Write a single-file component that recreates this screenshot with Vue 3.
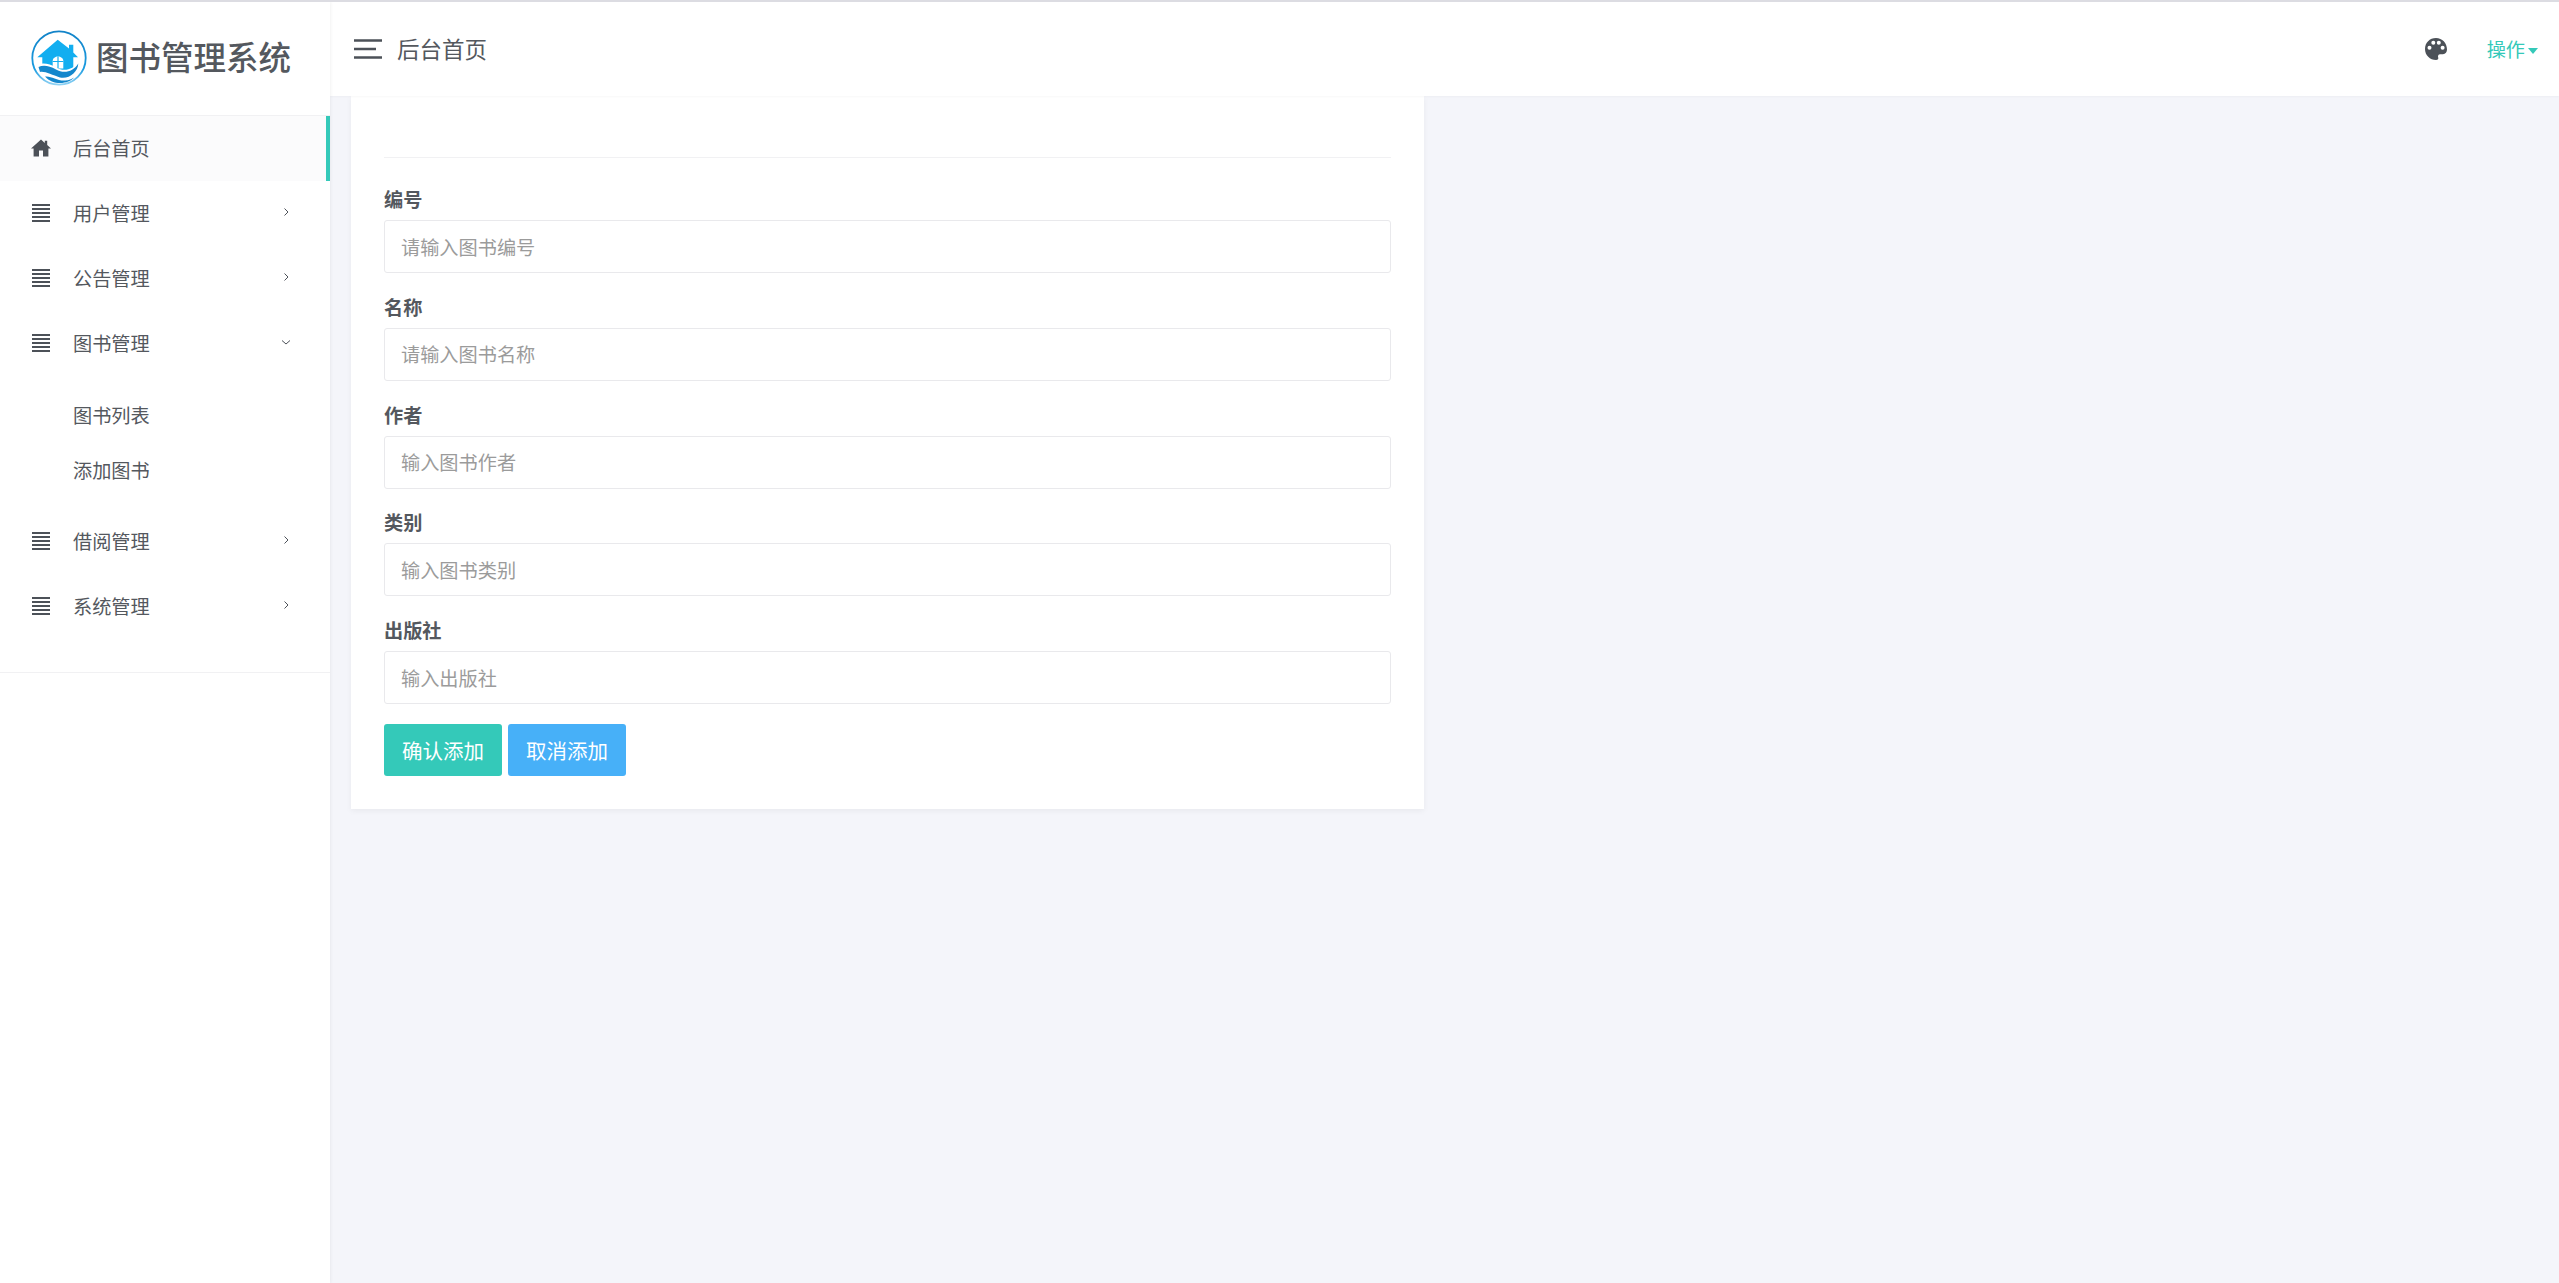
<template>
  <div class="app">
    <aside class="sidebar">
      <div class="brand">
        <svg class="logo" viewBox="0 0 56 56" width="56" height="56">
          <defs>
            <linearGradient id="ring" x1="0" y1="0" x2="0" y2="1">
              <stop offset="0" stop-color="#1283c8" />
              <stop offset="0.7" stop-color="#1a9be0" />
              <stop offset="1" stop-color="#8fd2f4" />
            </linearGradient>
          </defs>
          <circle cx="28" cy="28" r="26.700" fill="#fff" stroke="url(#ring)" stroke-width="1.800" />
          <path d="M26.700 9.700 L38 18.500 V14.700 H42.300 V22.500 L47 27.300 H42.300 V40 H11.300 V27.300 H6.300 Z" fill="#12aef0" />
          <path d="M21.700 38.500 V31 C21.700 25 32.300 25 32.300 31 V38.500 Z" fill="#fff" />
          <path d="M27 26.500 V38.500 M21.700 31.500 H32.300" stroke="#12aef0" stroke-width="1.200" />
          <path d="M6 34.500 C12 32.500 19 33.500 25 37.500 C33 42 42 40 48 31 L50 34 C48 46 38 50 28 47 C20 44 12 43 8 44 Z" fill="#fff" />
          <path d="M7.500 37 C12 35 18 35.500 25 39.500 C33 44 42 42 47.300 33.500 C47 42 38 49.500 29 47.500 C21 45 14 41 9 42 Z" fill="#1487cc" />
          <path d="M14 46.500 C20 45.500 26 51 34 50.500 C38 50.300 41 49 43 47.500 C38 54 22 56 14 46.500 Z" fill="#1487cc" />
        </svg>
        <span class="brand-name">图书管理系统</span>
      </div>
      <nav class="menu">
        <template v-for="item in menu" :key="item.label">
          <a class="menu-item" :class="{ active: item.active }">
            <svg v-if="item.active" class="mi home" viewBox="0 0 20 18" width="20" height="18">
              <path d="M10 0.500 L13.800 3.900 V1.800 H16.200 V6 L20 9.500 H17.400 V17.500 H12 V11.500 H8 V17.500 H2.600 V9.500 H0 Z" fill="#4c5158" />
            </svg>
            <svg v-else class="mi" viewBox="0 0 18 18" width="18" height="18">
              <path d="M0 1h18M0 5h18M0 9h18M0 13h18M0 17h18" stroke="#4c5158" stroke-width="2" />
            </svg>
            <span class="label">{{ item.label }}</span>
            <svg v-if="item.arrow === 'right'" class="arrow" viewBox="0 0 8 10" width="8" height="10">
              <path d="M2.500 1.500 L6 5 L2.500 8.500" fill="none" stroke="#4c5158" stroke-width="1" />
            </svg>
            <svg v-if="item.arrow === 'down'" class="arrow down" viewBox="0 0 10 8" width="10" height="8">
              <path d="M1 2.500 L5 6 L9 2.500" fill="none" stroke="#4c5158" stroke-width="1" />
            </svg>
          </a>
          <div v-if="item.children" class="submenu">
            <a v-for="c in item.children" :key="c" class="sub-item">{{ c }}</a>
          </div>
        </template>
      </nav>
    </aside>

    <div class="main">
      <header class="topbar">
        <svg class="burger" viewBox="0 0 28 20" width="28" height="20">
          <path d="M0 1.500h28M0 10h22M0 18.500h28" stroke="#4c5158" stroke-width="2.400" />
        </svg>
        <span class="page-title">后台首页</span>
        <svg class="palette" viewBox="0 0 24 24" width="24" height="24">
          <path fill-rule="evenodd" fill="#4c5158" d="M12 1C5.600 1 1 5.700 1 12s5 11 11 11c2 0 2.600-1.200 2.200-2.400-.5-1.500-.2-3.400 2-3.400H19c2.500 0 4-2 4-4.700C23 6 18.200 1 12 1ZM5.500 12.700a2 2 0 1 1 0-4 2 2 0 0 1 0 4Zm3.800-5a2 2 0 1 1 0-4 2 2 0 0 1 0 4Zm5.500 0a2 2 0 1 1 0-4 2 2 0 0 1 0 4Zm3.800 5a2 2 0 1 1 0-4 2 2 0 0 1 0 4Z" />
        </svg>
        <span class="action">操作<i class="caret"></i></span>
      </header>

      <section class="content">
        <div class="card">
          <div class="card-head"></div>
          <form class="form" @submit.prevent>
            <div v-for="f in fields" :key="f.label" class="field">
              <label>{{ f.label }}</label>
              <input type="text" :placeholder="f.placeholder" />
            </div>
            <div class="buttons">
              <button class="btn primary" type="button">确认添加</button>
              <button class="btn info" type="button">取消添加</button>
            </div>
          </form>
        </div>
      </section>
    </div>
  </div>
</template>

<script setup>
const menu = [
  { label: '后台首页', active: true },
  { label: '用户管理', arrow: 'right' },
  { label: '公告管理', arrow: 'right' },
  { label: '图书管理', arrow: 'down', children: ['图书列表', '添加图书'] },
  { label: '借阅管理', arrow: 'right' },
  { label: '系统管理', arrow: 'right' }
]

const fields = [
  { label: '编号', placeholder: '请输入图书编号' },
  { label: '名称', placeholder: '请输入图书名称' },
  { label: '作者', placeholder: '输入图书作者' },
  { label: '类别', placeholder: '输入图书类别' },
  { label: '出版社', placeholder: '输入出版社' }
]
</script>

<style>
html,
body {
  margin: 0;
  background: #f4f5fa;
}
</style>

<style scoped>
.app {
  display: flex;
  height: 1283px;
  box-sizing: border-box;
  border-top: 2px solid #dcdce2;
  font-family: "Noto Sans CJK SC", "Noto Sans", sans-serif;
  color: #54585e;
  overflow: hidden;
}
.sidebar {
  width: 330px;
  flex: none;
  background: #fff;
  box-shadow: 1px 0 3px rgba(0, 0, 0, 0.05);
  position: relative;
  z-index: 2;
}
.brand {
  height: 113px;
  display: flex;
  align-items: center;
  padding-left: 31px;
  gap: 9px;
  box-sizing: border-box;
  padding-bottom: 2px;
}
.logo {
  flex: none;
}
.brand-name {
  font-size: 32.500px;
  font-weight: 500;
  line-height: 1;
  white-space: nowrap;
  margin-top: -3px;
}
.menu {
  border-top: 1px solid #f1f1f3;
  border-bottom: 1px solid #f1f1f3;
  padding-bottom: 33px;
}
.menu-item {
  height: 65px;
  display: flex;
  align-items: center;
  padding: 0 40px 2px 32px;
  font-size: 19.200px;
  box-sizing: border-box;
}
.menu-item.active {
  background: #fbfbfc;
  border-right: 4px solid #34c9b9;
  padding-right: 36px;
}
.mi {
  flex: none;
}
.mi.home {
  margin: 0 -1px;
}
.label {
  margin-left: 23px;
  flex: 1;
}
.arrow {
  flex: none;
  margin-top: -2px;
}
.arrow.down {
  margin-right: -1px;
}
.submenu {
  padding: 12px 0 11px;
}
.sub-item {
  display: block;
  height: 55px;
  line-height: 54px;
  padding-left: 73px;
  font-size: 19.200px;
}
.main {
  flex: 1;
  min-width: 0;
  display: flex;
  flex-direction: column;
}
.topbar {
  height: 94px;
  flex: none;
  background: #fff;
  display: flex;
  align-items: center;
  padding: 0 21px 0 24px;
  box-shadow: 0 1px 2px rgba(0, 0, 0, 0.03);
  position: relative;
  z-index: 1;
}
.page-title {
  margin-left: 15px;
  font-size: 22.500px;
  flex: 1;
  padding-bottom: 3px;
}
.palette {
  margin-right: 39px;
}
.action {
  color: #34c9b9;
  font-size: 19.200px;
  display: flex;
  align-items: center;
}
.caret {
  margin-left: 3px;
  margin-top: 3px;
  border-top: 6px solid #34c9b9;
  border-left: 5.500px solid transparent;
  border-right: 5.500px solid transparent;
}
.content {
  flex: 1;
  padding-left: 21px;
}
.card {
  width: 1073px;
  background: #fff;
  box-shadow: 0 2px 6px rgba(0, 0, 0, 0.05);
  padding: 0 33px 33px 33px;
  box-sizing: border-box;
}
.card-head {
  height: 61px;
  border-bottom: 1px solid #f1f1f3;
}
.field {
  height: 107.800px;
}
.form {
  padding-top: 24px;
}
.field label {
  display: block;
  height: 38px;
  line-height: 34px;
  font-size: 19.200px;
  font-weight: 700;
}
.field input {
  display: block;
  width: 100%;
  height: 53px;
  box-sizing: border-box;
  border: 1px solid #e9e9ec;
  border-radius: 3px;
  padding: 0 16px;
  font: inherit;
  font-size: 19.200px;
  color: #54585e;
  outline: none;
}
.field input::placeholder {
  color: #9b9b9b;
  opacity: 1;
}
.buttons {
  display: flex;
  gap: 6px;
  margin-top: 3px;
}
.btn {
  width: 118px;
  height: 52px;
  border: none;
  border-radius: 3px;
  color: #fff;
  font: inherit;
  font-size: 20.500px;
  padding: 0;
}
.btn.primary {
  background: #34c9b9;
}
.btn.info {
  background: #47b0f8;
}
</style>
